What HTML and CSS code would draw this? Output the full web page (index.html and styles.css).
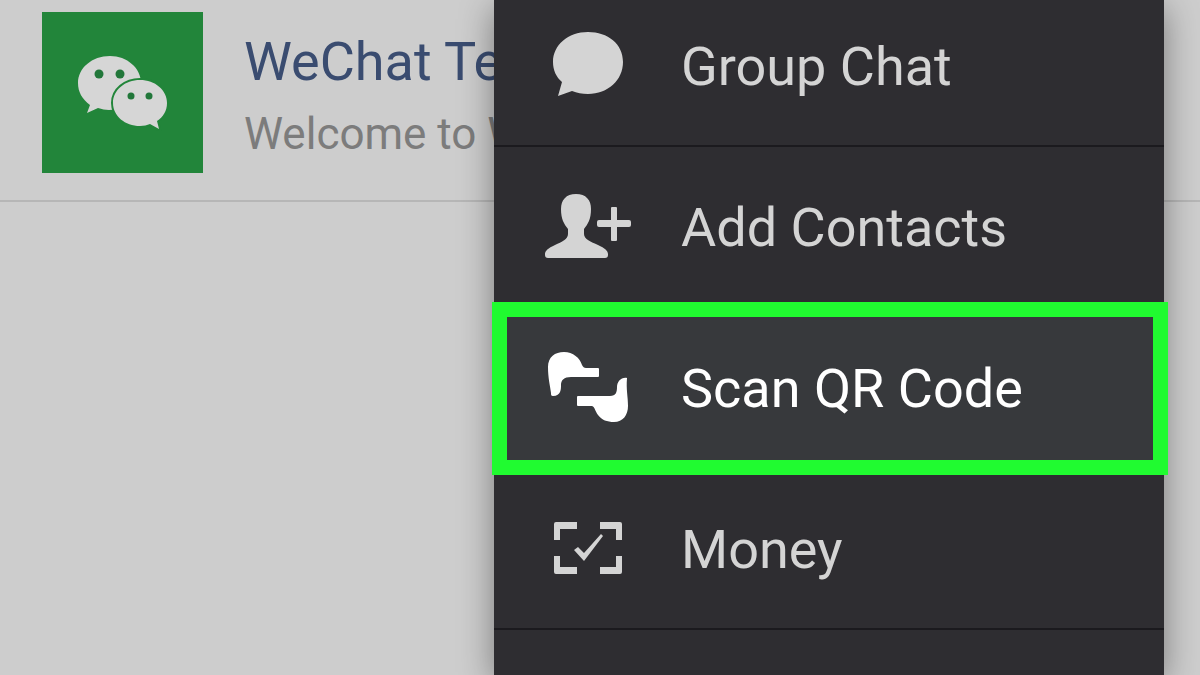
FILE: index.html
```html
<!DOCTYPE html>
<html lang="en">
<head>
<meta charset="utf-8">
<title>WeChat</title>
<link rel="stylesheet" href="styles.css">
</head>
<body>
<main class="chats">
  <a class="chat" href="#">
    <span class="avatar">
      <svg class="avatar-logo" viewBox="0 0 92 76" aria-hidden="true">
        <path class="bubble" d="M33 1C15 1 1 13 1 28c0 9 4 16 12 22l-3 8 11-5c4 1 7 2 11 2 17 0 32-12 32-27S50 1 33 1z"/>
        <circle class="eye" cx="22" cy="19" r="4.500"/>
        <circle class="eye" cx="43" cy="19" r="4.500"/>
        <path class="bubble bubble-front" d="M63 25c15 0 27 10 27 23 0 8-4 14-10 18l2 8-9-5c-3 1-6 2-10 2-15 0-27-10-27-23s12-23 27-23z"/>
        <circle class="eye" cx="54" cy="41" r="3.500"/>
        <circle class="eye" cx="72" cy="41" r="3.500"/>
      </svg>
    </span>
    <span class="chat-text">
      <span class="chat-name">WeChat Team</span>
      <span class="chat-preview">Welcome to WeChat</span>
    </span>
  </a>
</main>
<nav class="menu">
  <div class="menu-list">
    <button class="item" type="button">
      <svg class="icon" viewBox="0 0 90 90" aria-hidden="true">
        <path d="M45 10C25 10 10 23 10 40c0 8 3 15 9 20L15 74l14-5c5 2 10 3 16 3 20 0 35-14 35-32S65 10 45 10z"/>
      </svg>
      <span>Group Chat</span>
    </button>
    <button class="item" type="button">
      <svg class="icon" viewBox="0 0 90 90" aria-hidden="true">
        <path d="M33 11c-10 0-15 6-15 15 0 10 3 15 7 20v5c0 5-6 8-13 11C5 65 2 68 2 71v1c0 2 1 3 3 3h57c2 0 3-1 3-3v-1c0-3-3-6-10-9-7-3-14-6-14-11v-5c4-5 7-10 7-20 0-9-5-15-15-15z"/>
        <path d="M69 24h4q1 0 1 1v12h12q2 0 2 2v3q0 2-2 2H74v13q0 1-1 1h-4q-1 0-1-1V44H56q-2 0-2-2v-3q0-2 2-2h12V25q0-1 1-1z"/>
      </svg>
      <span>Add Contacts</span>
    </button>
    <button class="item selected" type="button">
      <svg class="icon" viewBox="0 0 90 90" aria-hidden="true">
        <path d="M5 23C5 13 12 8 21 8c9 0 16 6 18 13 1 2 2 3 4 3h12q1 0 1 1v7q0 1-1 1H28c-7 0-10 3-10 8 0 4 0 11-8 11-2 0-2-1-2-3-1-8-3-15-3-26z"/>
        <path d="M84 34c-6-1-10 4-10 9s-1 9-7 9H35q-1 0-1 1v8q0 1 1 1h14c3 1 3 5 6 9 4 5 9 7 16 7 9 0 14-7 14-16 0-10-2-16-1-28z"/>
      </svg>
      <span>Scan QR Code</span>
    </button>
    <button class="item" type="button">
      <svg class="icon" viewBox="0 0 90 90" aria-hidden="true">
        <path d="M11 35V19q0-2 2-2h21v7H17v11zM57 17h20q2 0 2 2v16h-6V24H57zM11 51h6v11h17v7H13q-2 0-2-2zM73 51h6v16q0 2-2 2H57v-7h16z"/>
        <path d="M31 45l4-3 6 6 17-19 2 2-19 25z"/>
      </svg>
      <span>Money</span>
    </button>
  </div>
</nav>
</body>
</html>
```
FILE: styles.css
```css
* {
  box-sizing: border-box;
}

body {
  margin: 0;
  min-height: 100vh;
  overflow: hidden;
  background: #cdcdcd;
  font-family: Roboto, sans-serif;
}

.chat {
  display: flex;
  align-items: flex-start;
  gap: 41px;
  padding: 12px 0 27px 42px;
  border-bottom: 2px solid #b6b6b6;
  text-decoration: none;
  white-space: nowrap;
}

.avatar {
  display: flex;
  flex: none;
  align-items: center;
  justify-content: center;
  width: 161px;
  height: 161px;
  background: #22853a;
}

.avatar-logo {
  width: 92px;
  height: 76px;
}

.bubble {
  fill: #d6d6d6;
}

.bubble-front {
  stroke: #22853a;
  stroke-width: 4px;
  paint-order: stroke;
}

.eye {
  fill: #22773a;
}

.chat-text {
  display: flex;
  flex-direction: column;
  gap: 12px;
  padding-top: 18px;
}

.chat-name {
  color: #3a4c70;
  font-size: 54px;
  line-height: 64px;
}

.chat-preview {
  color: #7c7c7c;
  font-size: 44px;
  line-height: 56px;
}

/* The menu floats over the chat list. */
.menu {
  position: absolute;
  top: 0;
  right: 36px;
  bottom: 0;
  left: 494px;
  background: #2e2d31;
  box-shadow: 0 8px 32px rgba(0, 0, 0, 0.4);
}

.menu-list {
  margin-top: -14px;
}

.item {
  display: flex;
  align-items: center;
  gap: 48px;
  width: 100%;
  height: 161px;
  padding: 3px 49px 0;
  border: 0;
  border-bottom: 2px solid #1b1a1e;
  background: none;
  color: #d4d4d4;
  font-family: inherit;
  font-size: 54px;
  line-height: 64px;
  text-align: left;
}

.icon {
  flex: none;
  width: 90px;
  height: 90px;
  fill: currentColor;
}

.selected {
  position: relative;
  border-bottom-color: transparent;
  background: #37393c;
  color: #ffffff;
}

/* Highlight frame, drawn a little outside the row. */
.selected::after {
  content: "";
  position: absolute;
  inset: -6px -4px;
  left: -2px;
  bottom: -8px;
  border: 15px solid #20fb30;
}
```
